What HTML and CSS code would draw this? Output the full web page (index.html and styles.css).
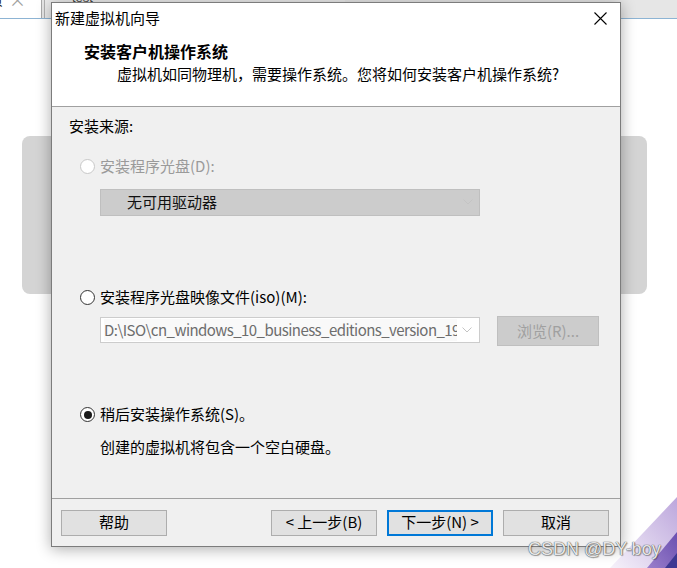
FILE: index.html
```html
<!DOCTYPE html>
<html lang="zh-CN">
<head>
<meta charset="utf-8">
<title>新建虚拟机向导</title>
<link rel="stylesheet" href="styles.css">
</head>
<body>
<div class="desktop">
  <div class="tabstrip">
    <div class="tab tab-active"><span class="tab-text">页</span><span class="tab-x">×</span></div>
    <div class="tab tab-other"><span class="tab-text2">test</span></div>
  </div>
  <div class="panel"></div>

  <div class="dialog">
    <div class="top">
      <div class="titlebar">
        <span class="title">新建虚拟机向导</span>
        <svg class="close" width="13" height="13" viewBox="0 0 13 13"><path d="M0.5 0.5 L12.5 12.5 M12.5 0.5 L0.5 12.5" stroke="#000" stroke-width="1.1" fill="none"/></svg>
      </div>
      <div class="head-title">安装客户机操作系统</div>
      <div class="head-sub">虚拟机如同物理机，需要操作系统。您将如何安装客户机操作系统?</div>
    </div>

    <div class="content">
      <div class="source">安装来源:</div>

      <div class="opt opt1 disabled">
        <span class="radio radio-disabled"></span>
        <span class="opt-label">安装程序光盘(D):</span>
      </div>
      <div class="combo combo-disabled">
        <span class="combo-text">无可用驱动器</span>
        <svg class="chev" width="10" height="6" viewBox="0 0 10 6"><path d="M0.5 0.5 L5 5 L9.5 0.5" stroke="#c4c4c4" fill="none"/></svg>
      </div>

      <div class="opt opt2">
        <span class="radio"></span>
        <span class="opt-label">安装程序光盘映像文件(iso)(M):</span>
      </div>
      <div class="iso-row">
        <div class="combo combo-iso">
          <span class="iso-text">D:\ISO\cn_windows_10_business_editions_version_190</span>
          <svg class="chev" width="10" height="6" viewBox="0 0 10 6"><path d="M0.5 0.5 L5 5 L9.5 0.5" stroke="#c4c4c4" fill="none"/></svg>
        </div>
        <div class="browse">浏览(R)...</div>
      </div>

      <div class="opt opt3">
        <span class="radio radio-checked"></span>
        <span class="opt-label">稍后安装操作系统(S)。</span>
      </div>
      <div class="desc">创建的虚拟机将包含一个空白硬盘。</div>
    </div>

    <div class="footer">
      <div class="btn">帮助</div>
      <div class="btn-group">
        <div class="btn">&lt; 上一步(B)</div>
        <div class="btn btn-default">下一步(N) &gt;</div>
        <div class="btn">取消</div>
      </div>
    </div>
  </div>

  <svg class="corner" width="70" height="72" viewBox="0 0 70 72">
    <defs>
      <linearGradient id="lav" x1="0" y1="1" x2="1" y2="0">
        <stop offset="0" stop-color="#f6f2fa"/>
        <stop offset="1" stop-color="#bca6dc"/>
      </linearGradient>
      <linearGradient id="mid" x1="0" y1="1" x2="1" y2="0">
        <stop offset="0" stop-color="#9a7fcb"/>
        <stop offset="1" stop-color="#6a4fb0"/>
      </linearGradient>
    </defs>
    <polygon points="3,72 70,1 70,72" fill="url(#lav)"/>
    <polygon points="40,72 70,36 70,72" fill="url(#mid)"/>
    <polygon points="58,72 70,57 70,72" fill="#3d3892"/>
  </svg>
  <div class="watermark">CSDN @DY-boy</div>
</div>
</body>
</html>
```
FILE: styles.css
```css
html, body {
  margin: 0;
  padding: 0;
}
body {
  width: 677px;
  height: 568px;
  overflow: hidden;
  background: #ffffff;
  font-family: "Noto Sans CJK SC", "Noto Sans", sans-serif;
}
.desktop {
  position: relative;
  width: 677px;
  height: 568px;
  overflow: hidden;
  background: #ffffff;
}

/* background tab strip */
.tabstrip {
  display: flex;
  height: 18px;
  background: #e6e6e6;
  border-bottom: 1px solid #8db4d4;
  overflow: hidden;
}
.tab {
  position: relative;
  height: 18px;
  overflow: hidden;
  font-size: 14px;
  line-height: 10px;
  color: #222;
}
.tab-active {
  width: 41px;
  background: #ffffff;
  border-right: 1px solid #a8a8a8;
  display: flex;
  align-items: flex-start;
}
.tab-text {
  margin-left: -11px;
  margin-top: -6px;
}
.tab-x {
  margin-left: 6px;
  margin-top: -5px;
  color: #a0a0a0;
  font-size: 17px;
}
.tab-other {
  margin-left: 2px;
  width: 300px;
  border-left: 1px solid #b0b0b0;
  background: #ebebeb;
}
.tab-text2 {
  display: block;
  margin-left: 27px;
  margin-top: -7px;
  font-family: "Liberation Sans", sans-serif;
  font-size: 13px;
  color: #444;
}

.panel {
  margin: 117px 0 0 22px;
  width: 625px;
  height: 158px;
  background: #d4d4d4;
  border-radius: 8px;
}

/* dialog window */
.dialog {
  position: absolute;
  left: 51px;
  top: 2px;
  width: 568px;
  height: 543px;
  border: 1px solid #7c7c7c;
  background: #f0f0f0;
  box-shadow: 0 2px 14px rgba(0, 0, 0, 0.33);
  display: flex;
  flex-direction: column;
  font-size: 15px;
  color: #000;
}
.top {
  height: 103px;
  background: #ffffff;
  border-bottom: 1px solid #a0a0a0;
}
.titlebar {
  display: flex;
  align-items: center;
  justify-content: space-between;
  height: 31px;
  padding: 0 13px 0 3px;
}
.title {
  font-size: 15px;
  line-height: 30px;
  padding-bottom: 1px;
}
.close {
  display: block;
}
.head-title {
  margin-top: 6px;
  padding-left: 32px;
  font-size: 16px;
  font-weight: bold;
  line-height: 22px;
}
.head-sub {
  margin-top: 1px;
  padding-left: 65px;
  font-size: 15px;
  line-height: 22px;
}

.content {
  flex: 1;
  padding: 9px 0 0 17px;
}
.source {
  line-height: 20px;
}
.opt {
  display: flex;
  align-items: center;
  height: 20px;
  line-height: 20px;
  margin-left: 11px;
}
.opt .radio {
  margin-top: 1px;
}
.opt1 {
  margin-top: 20px;
}
.opt2 {
  margin-top: 71px;
}
.opt3 {
  margin-top: 58px;
}
.disabled .opt-label {
  color: #9a9a9a;
}
.radio {
  box-sizing: border-box;
  width: 15px;
  height: 15px;
  border: 1px solid #333333;
  border-radius: 50%;
  background: #ffffff;
  margin-right: 5px;
  display: flex;
  align-items: center;
  justify-content: center;
}
.radio-disabled {
  border-color: #c8c8c8;
}
.radio-checked::after {
  content: "";
  width: 8px;
  height: 8px;
  border-radius: 50%;
  background: #1a1a1a;
}

.combo {
  box-sizing: border-box;
  display: flex;
  align-items: center;
  justify-content: space-between;
  width: 380px;
  border: 1px solid #c2c2c2;
}
.combo-disabled {
  margin: 13px 0 0 31px;
  height: 27px;
  background: #cccccc;
  border-color: #bfbfbf;
  padding: 0 6px 1px 26px;
  color: #111;
}
.combo-text {
  line-height: 20px;
}
.chev {
  display: block;
}
.iso-row {
  display: flex;
  align-items: flex-start;
  margin: 9px 0 0 31px;
}
.combo-iso {
  margin-top: 1px;
  height: 26px;
  background: #ffffff;
  border-color: #cccccc;
  padding: 0 7px 1px 3px;
}
.iso-text {
  width: 353px;
  overflow: hidden;
  white-space: nowrap;
  color: #6d6d6d;
  background: #f9f9f9;
  line-height: 22px;
  font-size: 15px;
  letter-spacing: -0.55px;
}
.browse {
  box-sizing: border-box;
  margin-left: 17px;
  width: 102px;
  height: 30px;
  padding-bottom: 1px;
  background: #cccccc;
  border: 1px solid #bfbfbf;
  color: #a0a0a0;
  display: flex;
  align-items: center;
  justify-content: center;
}
.desc {
  margin-top: 13px;
  padding-left: 31px;
  line-height: 20px;
}

.footer {
  height: 48px;
  box-sizing: border-box;
  border-top: 1px solid #a0a0a0;
  padding: 11px 11px 0 9px;
  display: flex;
  justify-content: space-between;
  align-items: flex-start;
}
.btn-group {
  display: flex;
  gap: 10px;
}
.btn {
  box-sizing: border-box;
  width: 106px;
  height: 26px;
  padding-bottom: 2px;
  line-height: 20px;
  background: #e1e1e1;
  border: 1px solid #adadad;
  display: flex;
  align-items: center;
  justify-content: center;
  font-size: 15px;
}
.btn-default {
  border: 2px solid #0078d7;
}

.corner {
  position: absolute;
  right: 0;
  bottom: 0;
}
.watermark {
  position: absolute;
  left: 528px;
  top: 538px;
  font-family: "Liberation Sans", Arial, sans-serif;
  font-size: 18px;
  line-height: 22px;
  color: rgba(250, 250, 250, 0.9);
  text-shadow: 0 0 1px #555, 0 0 1px #555, 1px 1px 1px rgba(0, 0, 0, 0.3);
}
```
